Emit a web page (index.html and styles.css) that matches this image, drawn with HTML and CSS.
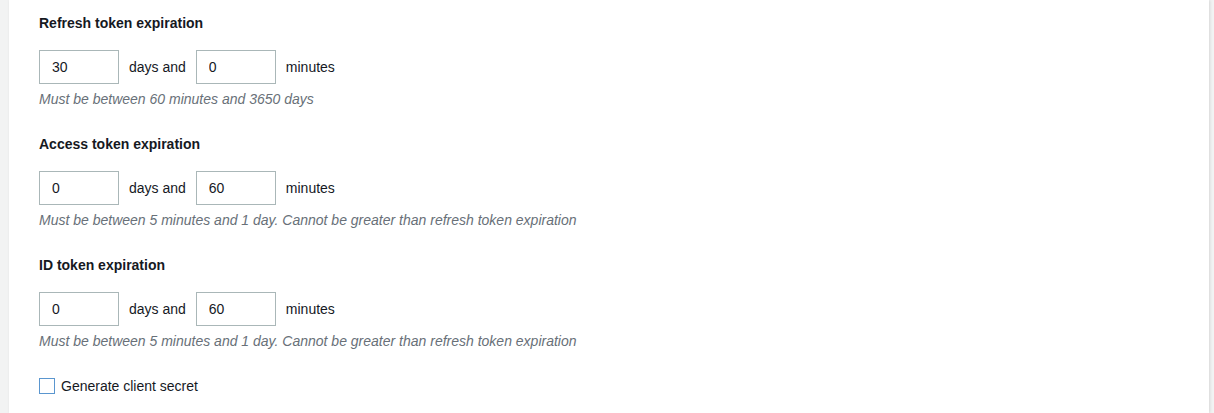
FILE: index.html
```html
<!DOCTYPE html>
<html>
<head>
<meta charset="utf-8">
<link rel="stylesheet" href="styles.css">
</head>
<body>
<div class="panel">
  <div class="section">
    <div class="label">Refresh token expiration</div>
    <div class="row">
      <input class="field" type="text" value="30">
      <span class="unit">days and</span>
      <input class="field" type="text" value="0">
      <span class="unit">minutes</span>
    </div>
    <div class="hint">Must be between 60 minutes and 3650 days</div>
  </div>
  <div class="section">
    <div class="label">Access token expiration</div>
    <div class="row">
      <input class="field" type="text" value="0">
      <span class="unit">days and</span>
      <input class="field" type="text" value="60">
      <span class="unit">minutes</span>
    </div>
    <div class="hint">Must be between 5 minutes and 1 day. Cannot be greater than refresh token expiration</div>
  </div>
  <div class="section">
    <div class="label">ID token expiration</div>
    <div class="row">
      <input class="field" type="text" value="0">
      <span class="unit">days and</span>
      <input class="field" type="text" value="60">
      <span class="unit">minutes</span>
    </div>
    <div class="hint">Must be between 5 minutes and 1 day. Cannot be greater than refresh token expiration</div>
  </div>
  <label class="check">
    <span class="box"></span>
    <span>Generate client secret</span>
  </label>
</div>
</body>
</html>
```

FILE: styles.css
```css
html, body {
  margin: 0;
  padding: 0;
  height: 100%;
}
body {
  background: #f2f3f3;
  font-family: "Liberation Sans", Arial, sans-serif;
  font-size: 14px;
  color: #16191f;
  overflow: hidden;
}
.panel {
  margin-left: 9px;
  width: 1200px;
  height: 413px;
  background: #ffffff;
  box-shadow: 1px 0 3px rgba(0, 0, 0, 0.12);
  padding: 13px 30px 0 30px;
  box-sizing: border-box;
}
.section {
  margin-bottom: 25px;
}
.label {
  font-weight: bold;
  line-height: 20px;
  margin-bottom: 17px;
}
.row {
  display: flex;
  align-items: center;
  height: 34px;
}
.field {
  box-sizing: border-box;
  width: 80px;
  height: 34px;
  border: 1px solid #aab7b8;
  border-radius: 0;
  padding: 0 12px;
  font-family: "Liberation Sans", Arial, sans-serif;
  font-size: 14px;
  color: #16191f;
  margin: 0;
  outline: none;
}
.unit {
  padding: 0 10px;
  line-height: 20px;
}
.hint {
  margin-top: 5px;
  line-height: 20px;
  font-style: italic;
  color: #687078;
}
.check {
  display: flex;
  align-items: center;
  gap: 6px;
  line-height: 20px;
  margin-top: 1px;
}
.box {
  width: 16px;
  height: 16px;
  box-sizing: border-box;
  border: 1px solid #5a96cf;
  background: #fff;
}
```
